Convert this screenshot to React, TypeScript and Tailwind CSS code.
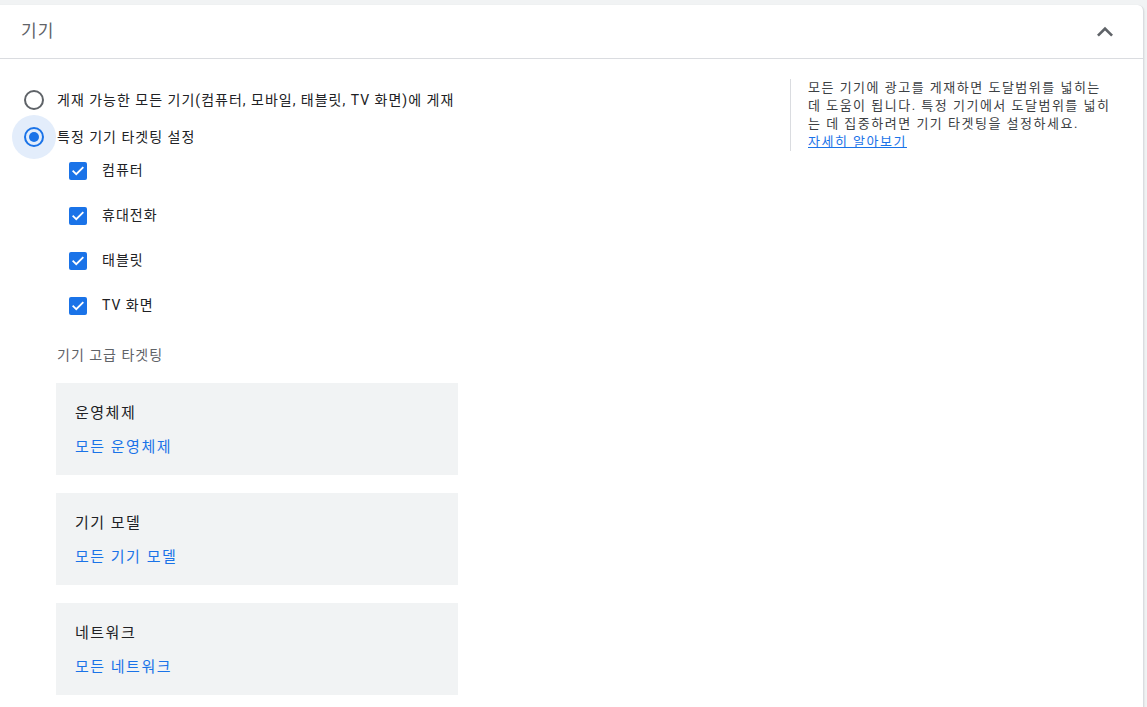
import React from 'react';

const font = { fontFamily: 'Roboto, "Noto Sans CJK KR", sans-serif' };

const Check: React.FC<{ label: string }> = ({ label }) => (
  <label className="flex items-center h-[45px] gap-[15px]">
    <span className="w-[18px] h-[18px] rounded-[2px] bg-[#1a73e8] flex items-center justify-center">
      <svg width="14" height="14" viewBox="0 0 24 24" fill="none" stroke="white" strokeWidth="3.2" strokeLinecap="square">
        <path d="M4 12.5l5 5L20 6.5" />
      </svg>
    </span>
    <span className="text-[14px] tracking-[1px] text-[#202124]">{label}</span>
  </label>
);

const Box: React.FC<{ title: string; link: string }> = ({ title, link }) => (
  <div className="w-[402px] h-[92px] bg-[#f1f3f4] px-[19px] pt-[19px]">
    <div className="text-[15px] tracking-[1.5px] text-[#202124] leading-[22px]">{title}</div>
    <div className="text-[15px] tracking-[1.5px] text-[#1a73e8] leading-[22px] mt-[12px]">{link}</div>
  </div>
);

const App: React.FC = () => {
  return (
    <div className="min-h-[707px] bg-[#f1f3f4] pt-[5px] pr-[3px]" style={font}>
      <div className="bg-white rounded-tr-[6px] border-r border-[#dadce0] shadow-[0_1px_2px_rgba(60,64,67,0.2)] min-h-[702px]">
        <div className="h-[54px] flex items-center justify-between pl-[21px] pr-[22px] border-b border-[#dadce0]">
          <h2 className="text-[17px] tracking-[1px] text-[#5f6368]">기기</h2>
          <svg width="32" height="32" viewBox="0 0 24 24" fill="#5f6368">
            <path d="M7.41 15.41L12 10.83l4.59 4.58L18 14l-6-6-6 6z" />
          </svg>
        </div>

        <div className="flex">
          <div className="w-[780px] pt-[23px]">
            <div className="flex items-center h-[36px] pl-[24px] gap-[13px]">
              <span className="w-[20px] h-[20px] rounded-full border-[2px] border-[#5f6368]" />
              <span className="text-[14px] tracking-[1px] text-[#202124]">게재 가능한 모든 기기(컴퓨터, 모바일, 태블릿, TV 화면)에 게재</span>
            </div>
            <div className="flex items-center h-[36px] pl-[24px] gap-[13px] mt-[1px]">
              <span className="relative w-[20px] h-[20px]">
                <span className="absolute -left-[12px] -top-[12px] w-[44px] h-[44px] rounded-full bg-[#e3edfb]" />
                <span className="absolute inset-0 rounded-full border-[2px] border-[#1a73e8] flex items-center justify-center">
                  <span className="w-[10px] h-[10px] rounded-full bg-[#1a73e8]" />
                </span>
              </span>
              <span className="relative text-[14px] tracking-[1px] text-[#202124]">특정 기기 타겟팅 설정</span>
            </div>
            <div className="pl-[69px] mt-[-7px]">
              <Check label="컴퓨터" />
              <Check label="휴대전화" />
              <Check label="태블릿" />
              <Check label="TV 화면" />
            </div>
            <div className="pl-[57px] mt-[17px] text-[14px] tracking-[1px] text-[#5f6368]">기기 고급 타겟팅</div>
            <div className="pl-[56px] mt-[17px] flex flex-col gap-[18px]">
              <Box title="운영체제" link="모든 운영체제" />
              <Box title="기기 모델" link="모든 기기 모델" />
              <Box title="네트워크" link="모든 네트워크" />
            </div>
          </div>

          <div className="pl-[10px] pt-[20px]">
            <div className="border-l border-[#dadce0] pl-[17px] w-[322px] text-[13px] leading-[18px] tracking-[1.5px] text-[#3c4043] break-all">
              모든 기기에 광고를 게재하면 도달범위를 넓히는 데 도움이 됩니다. 특정 기기에서 도달범위를 넓히는 데 집중하려면 기기 타겟팅을 설정하세요.
              <br />
              <a className="text-[#1a73e8] underline">자세히 알아보기</a>
            </div>
          </div>
        </div>
      </div>
    </div>
  );
};

export default App;
